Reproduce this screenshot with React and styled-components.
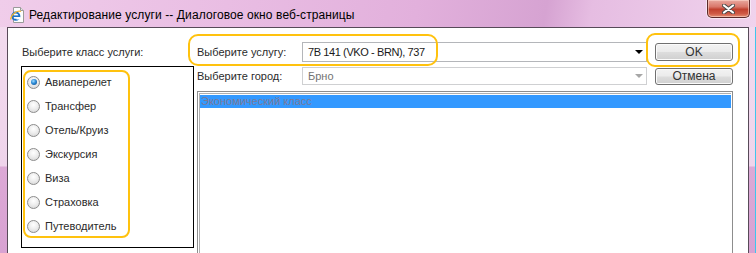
import React from 'react';
import styled, { createGlobalStyle } from 'styled-components';

const Global = createGlobalStyle`
  html, body { margin: 0; padding: 0; background: #fff; }
  body { width: 756px; height: 253px; overflow: hidden; }
`;

const UI = '"Liberation Sans", Arial, sans-serif';
const MARK = '#ffc20e';

const Window = styled.div`
  position: relative;
  width: 756px;
  height: 253px;
  overflow: hidden;
  display: flex;
  flex-direction: column;
  background: linear-gradient(to bottom, #f3dcef 0, #efd4eb 166px, #dca9d6 167px, #d8a2d2 100%);
  font-family: ${UI};
`;

const TitleBar = styled.div`
  height: 27px;
  flex: none;
  display: flex;
  align-items: center;
  background: linear-gradient(100deg, #f0cdea 0%, #e9bde3 30%, #e2b0dc 55%, #d6a3d2 72%, #e6bde2 78%, #f0d3ed 100%);
`;

const AppIcon = styled.svg`
  width: 16px;
  height: 16px;
  margin-left: 9px;
  margin-top: 2px;
  flex: none;
`;

const Title = styled.div`
  margin-left: 4px;
  padding-top: 2px;
  font-size: 12px;
  letter-spacing: 0.1px;
  color: #000;
  white-space: nowrap;
`;

const CloseButton = styled.div`
  align-self: flex-start;
  margin-left: auto;
  margin-right: 6px;
  width: 43px;
  height: 18px;
  box-sizing: border-box;
  border: 1px solid #5c2a2a;
  border-top: none;
  border-radius: 0 0 5px 5px;
  background: linear-gradient(to bottom, #e9a99f 0%, #d9776a 40%, #c1412f 55%, #cf5a45 80%, #e58f76 100%);
  box-shadow: inset 0 0 0 1px rgba(255, 220, 210, 0.55), 0 0 0 1px rgba(255, 255, 255, 0.5);
  display: flex;
  align-items: center;
  justify-content: center;
`;

const Frame = styled.div`
  flex: 1;
  display: flex;
  padding: 0 6px 0 7px;
  border-right: 1px solid #3ec6ee;
  min-height: 0;
`;

const Client = styled.div`
  position: relative;
  flex: 1;
  background: #fff;
  border: 1px solid #574a58;
  border-bottom: none;
  display: grid;
  grid-template-columns: 176px 105px 353px 78px;
  grid-template-rows: 20px 20px 1fr;
  row-gap: 4px;
  align-content: start;
  padding: 14px 0 0 13px;
  font-size: 11px;
  color: #222;
`;

const Label = styled.div`
  align-self: center;
  padding-left: ${p => p.$indent || 0}px;
  white-space: nowrap;
  color: #2b2b2b;
`;

const ClassBox = styled.div`
  grid-column: 1;
  grid-row: 2 / span 2;
  width: 173px;
  height: 182px;
  box-sizing: border-box;
  border: 1px solid #000;
  padding: 3px 0 0 1px;
`;

const RadioGroup = styled.div`
  width: 107px;
  height: 168px;
  box-sizing: border-box;
  outline: 2px solid ${MARK};
  outline-offset: -2px;
  border-radius: 8px;
  padding-left: 4px;
  display: flex;
  flex-direction: column;
`;

const RadioRow = styled.label`
  height: 24.2px;
  display: flex;
  align-items: center;
  gap: 5px;
  color: #2b2b2b;
  white-space: nowrap;
`;

const RadioDot = styled.span`
  width: 13px;
  height: 13px;
  flex: none;
  box-sizing: border-box;
  border-radius: 50%;
  border: 1px solid #8c8c8c;
  background: radial-gradient(circle at 50% 35%, #ffffff 0%, #eeeeee 45%, #d2d2d2 100%);
  display: flex;
  align-items: center;
  justify-content: center;
  &::after {
    content: '';
    width: 6px;
    height: 6px;
    border-radius: 50%;
    background: ${p => (p.$checked
      ? 'radial-gradient(circle at 40% 35%, #9fdcff 0%, #2b8ad6 45%, #0d3f7a 100%)'
      : 'transparent')};
  }
`;

const Select = styled.div`
  align-self: center;
  width: 345px;
  height: ${p => p.$h}px;
  box-sizing: border-box;
  border: 1px solid ${p => (p.$disabled ? '#cfd0d2' : '#b4b6ba')};
  background: #fff;
  display: flex;
  align-items: center;
  padding-left: 5px;
  color: ${p => (p.$disabled ? '#737373' : '#1a1a1a')};
  white-space: nowrap;
`;

const SelectValue = styled.span`
  letter-spacing: -0.4px;
`;

const Arrow = styled.span`
  margin-left: auto;
  margin-right: 3px;
  width: 0;
  height: 0;
  border-left: 4px solid transparent;
  border-right: 4px solid transparent;
  border-top: 4px solid ${p => (p.$disabled ? '#a7a7a7' : '#000')};
`;

const Button = styled.button`
  align-self: center;
  width: 78px;
  height: ${p => p.$h}px;
  box-sizing: border-box;
  padding: 0;
  border: 1px solid #707070;
  border-radius: 3px;
  background: linear-gradient(to bottom, #f3f3f3 0%, #ebebeb 48%, #dddddd 52%, #cfcfcf 100%);
  box-shadow: inset 0 0 0 1px #fbfbfb;
  font: 12px ${UI};
  color: #333;
  line-height: 1;
`;

const ListBox = styled.div`
  grid-column: 2 / span 3;
  grid-row: 3;
  margin-top: 1px;
  height: 200px;
  box-sizing: border-box;
  border: 1px solid #8d8d8d;
  padding: 1px;
  background: #fff;
`;

const ListInner = styled.div`
  height: 100%;
  box-sizing: border-box;
  border-top: 1px solid #b0b0b0;
  border-left: 1px solid #b0b0b0;
  padding-top: 1px;
`;

const ListItem = styled.div`
  height: 13px;
  line-height: 13px;
  background: ${p => (p.$selected ? '#3399ff' : 'transparent')};
  color: #7a7a99;
  padding-left: 1px;
  white-space: nowrap;
`;

const Highlight = styled.div`
  position: absolute;
  left: ${p => p.$x}px;
  top: ${p => p.$y}px;
  width: ${p => p.$w}px;
  height: ${p => p.$h}px;
  box-sizing: border-box;
  border: 2px solid ${MARK};
  border-radius: ${p => p.$r}px;
  pointer-events: none;
`;

const classes = ['Авиаперелет', 'Трансфер', 'Отель/Круиз', 'Экскурсия', 'Виза', 'Страховка', 'Путеводитель'];

export default function App() {
  return (
    <>
      <Global />
      <Window>
        <TitleBar>
          <AppIcon viewBox="0 0 16 16">
            <path d="M4.5 0.5 H11.5 L14.5 3.5 V15.5 H4.5 Z" fill="#fdfdfd" stroke="#9a9a9a" />
            <path d="M11.5 0.5 V3.5 H14.5" fill="#e6e6e6" stroke="#9a9a9a" />
            <circle cx="6.8" cy="9.2" r="3.6" fill="none" stroke="#1e73c8" strokeWidth="2" />
            <rect x="3.4" y="8.4" width="7" height="1.6" fill="#1e73c8" />
            <rect x="7.5" y="10" width="4" height="2.5" fill="#fdfdfd" />
            <path d="M1.5 12.5 C 3 6, 9 3, 12 4.5" fill="none" stroke="#f2b632" strokeWidth="1.2" />
          </AppIcon>
          <Title>Редактирование услуги -- Диалоговое окно веб-страницы</Title>
          <CloseButton>
            <svg width="13" height="10" viewBox="0 0 13 10">
              <path d="M2 1.5 L11 8.5 M11 1.5 L2 8.5" stroke="#4a4a4a" strokeWidth="4" strokeLinecap="round" />
              <path d="M2 1.5 L11 8.5 M11 1.5 L2 8.5" stroke="#ffffff" strokeWidth="2.2" strokeLinecap="round" />
            </svg>
          </CloseButton>
        </TitleBar>
        <Frame>
          <Client>
            <Label $indent={1}>Выберите класс услуги:</Label>
            <Label>Выберите услугу:</Label>
            <Select $h={20}>
              <SelectValue>7B 141 (VKO - BRN), 737</SelectValue>
              <Arrow />
            </Select>
            <Button $h={18}>OK</Button>

            <ClassBox>
              <RadioGroup>
                {classes.map((c, i) => (
                  <RadioRow key={c}>
                    <RadioDot $checked={i === 0} />
                    {c}
                  </RadioRow>
                ))}
              </RadioGroup>
            </ClassBox>
            <Label>Выберите город:</Label>
            <Select $h={18} $disabled>
              Брно
              <Arrow $disabled />
            </Select>
            <Button $h={17}>Отмена</Button>

            <ListBox>
              <ListInner>
                <ListItem $selected>Экономический класс</ListItem>
              </ListInner>
            </ListBox>

            <Highlight $x={180} $y={6} $w={250} $h={32} $r={10} />
            <Highlight $x={638} $y={5} $w={94} $h={34} $r={9} />
          </Client>
        </Frame>
      </Window>
    </>
  );
}
